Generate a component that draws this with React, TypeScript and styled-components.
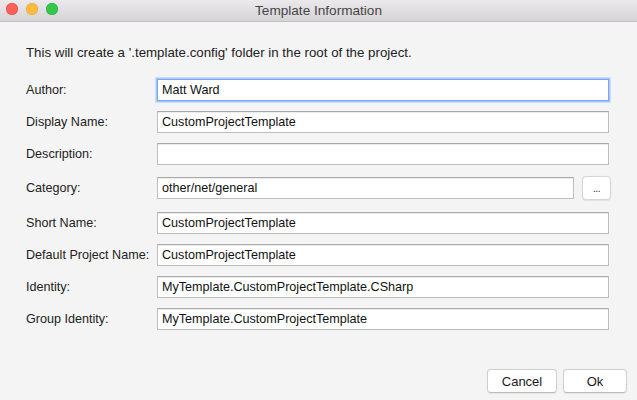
import React from "react";
import styled, { createGlobalStyle } from "styled-components";

const GlobalStyle = createGlobalStyle`
  html, body {
    margin: 0;
    padding: 0;
    background: #f4f4f4;
  }
  body {
    font-family: "Liberation Sans", Arial, sans-serif;
    -webkit-font-smoothing: antialiased;
  }
`;

type FieldProps = {
  focused?: boolean;
};

type RowProps = {
  wide?: boolean;
};

const fields = [
  { label: "Author:", value: "Matt Ward", focused: true },
  { label: "Display Name:", value: "CustomProjectTemplate" },
  { label: "Description:", value: "" },
  { label: "Category:", value: "other/net/general", browse: true },
  { label: "Short Name:", value: "CustomProjectTemplate" },
  { label: "Default Project Name:", value: "CustomProjectTemplate" },
  { label: "Identity:", value: "MyTemplate.CustomProjectTemplate.CSharp" },
  { label: "Group Identity:", value: "MyTemplate.CustomProjectTemplate" },
];

const App: React.FC = () => {
  return (
    <Window>
      <GlobalStyle />
      <TitleBar>
        <Lights>
          <Light color="#fc605b" edge="#de4a44" />
          <Light color="#fdbc40" edge="#dea234" />
          <Light color="#34c84a" edge="#27aa36" />
        </Lights>
        <Title>Template Information</Title>
      </TitleBar>
      <Body>
        <Intro>
          This will create a '.template.config' folder in the root of the project.
        </Intro>
        <Form>
          {fields.map((field) => (
            <Row key={field.label} wide={field.browse}>
              <Label>{field.label}</Label>
              <Field focused={field.focused}>{field.value}</Field>
              {field.browse && <BrowseButton>...</BrowseButton>}
            </Row>
          ))}
        </Form>
      </Body>
      <Footer>
        <PushButton style={{ width: 70 }}>Cancel</PushButton>
        <PushButton style={{ width: 64 }}>Ok</PushButton>
      </Footer>
    </Window>
  );
};

const Window = styled.div`
  width: 637px;
  height: 400px;
  display: flex;
  flex-direction: column;
  background: #f4f4f4;
  overflow: hidden;
`;

const TitleBar = styled.div`
  position: relative;
  height: 21px;
  flex-shrink: 0;
  display: flex;
  align-items: center;
  justify-content: center;
  background: linear-gradient(#ebe9eb, #d5d3d5);
  border-bottom: 1px solid #c2c0c2;
`;

const Lights = styled.div`
  position: absolute;
  left: 6px;
  top: 3px;
  display: flex;
  gap: 8px;
`;

const Light = styled.span<{ color: string; edge: string }>`
  width: 12px;
  height: 12px;
  border-radius: 50%;
  background: ${(p) => p.color};
  box-shadow: inset 0 0 0 0.5px ${(p) => p.edge};
`;

const Title = styled.div`
  font-size: 13.6px;
  color: #464646;
  margin-left: 0;
`;

const Body = styled.div`
  flex: 1;
  padding: 0 28px 0 26px;
`;

const Intro = styled.p`
  margin: 23px 0 0;
  font-size: 13.3px;
  line-height: 16px;
  color: #222;
`;

const Form = styled.div`
  margin-top: 18px;
  display: flex;
  flex-direction: column;
  gap: 10px;
`;

const Row = styled.div<RowProps>`
  display: flex;
  align-items: center;
  min-height: 22px;
  margin: ${(p) => (p.wide ? "1px -2px 2px 0" : "0")};
`;

const Label = styled.div`
  width: 131px;
  flex-shrink: 0;
  font-size: 12.6px;
  color: #222;
`;

const Field = styled.div<FieldProps>`
  flex: 1;
  height: 22px;
  box-sizing: border-box;
  padding: 0 4px;
  display: flex;
  align-items: center;
  background: #fff;
  font-size: 12.6px;
  color: #111;
  border: 1px solid ${(p) => (p.focused ? "#7aa7f2" : "#bdbdbd")};
  border-top-color: ${(p) => (p.focused ? "#7aa7f2" : "#a9a9a9")};
  box-shadow: ${(p) =>
    p.focused ? "0 0 0 1.5px #a8c6f7" : "inset 0 1px 0 #ededed"};
  white-space: nowrap;
`;

const BrowseButton = styled.div`
  width: 29px;
  height: 24px;
  margin-left: 8px;
  box-sizing: border-box;
  display: flex;
  align-items: center;
  justify-content: center;
  padding-top: 1px;
  background: #fff;
  border: 1px solid #d6d6d6;
  border-radius: 4px;
  font-size: 10px;
  letter-spacing: -0.5px;
  color: #1a2a5a;
  box-shadow: 0 0.5px 1px rgba(0, 0, 0, 0.08);
`;

const Footer = styled.div`
  display: flex;
  justify-content: flex-end;
  gap: 6px;
  padding: 0 10px 7px 0;
`;

const PushButton = styled.div`
  height: 24px;
  box-sizing: border-box;
  display: flex;
  align-items: center;
  justify-content: center;
  background: #fff;
  border: 1px solid #cfcfcf;
  border-bottom-color: #bcbcbc;
  border-radius: 4px;
  font-size: 13px;
  color: #1a1a1a;
  box-shadow: 0 0.5px 1px rgba(0, 0, 0, 0.06);
`;

export default App;
